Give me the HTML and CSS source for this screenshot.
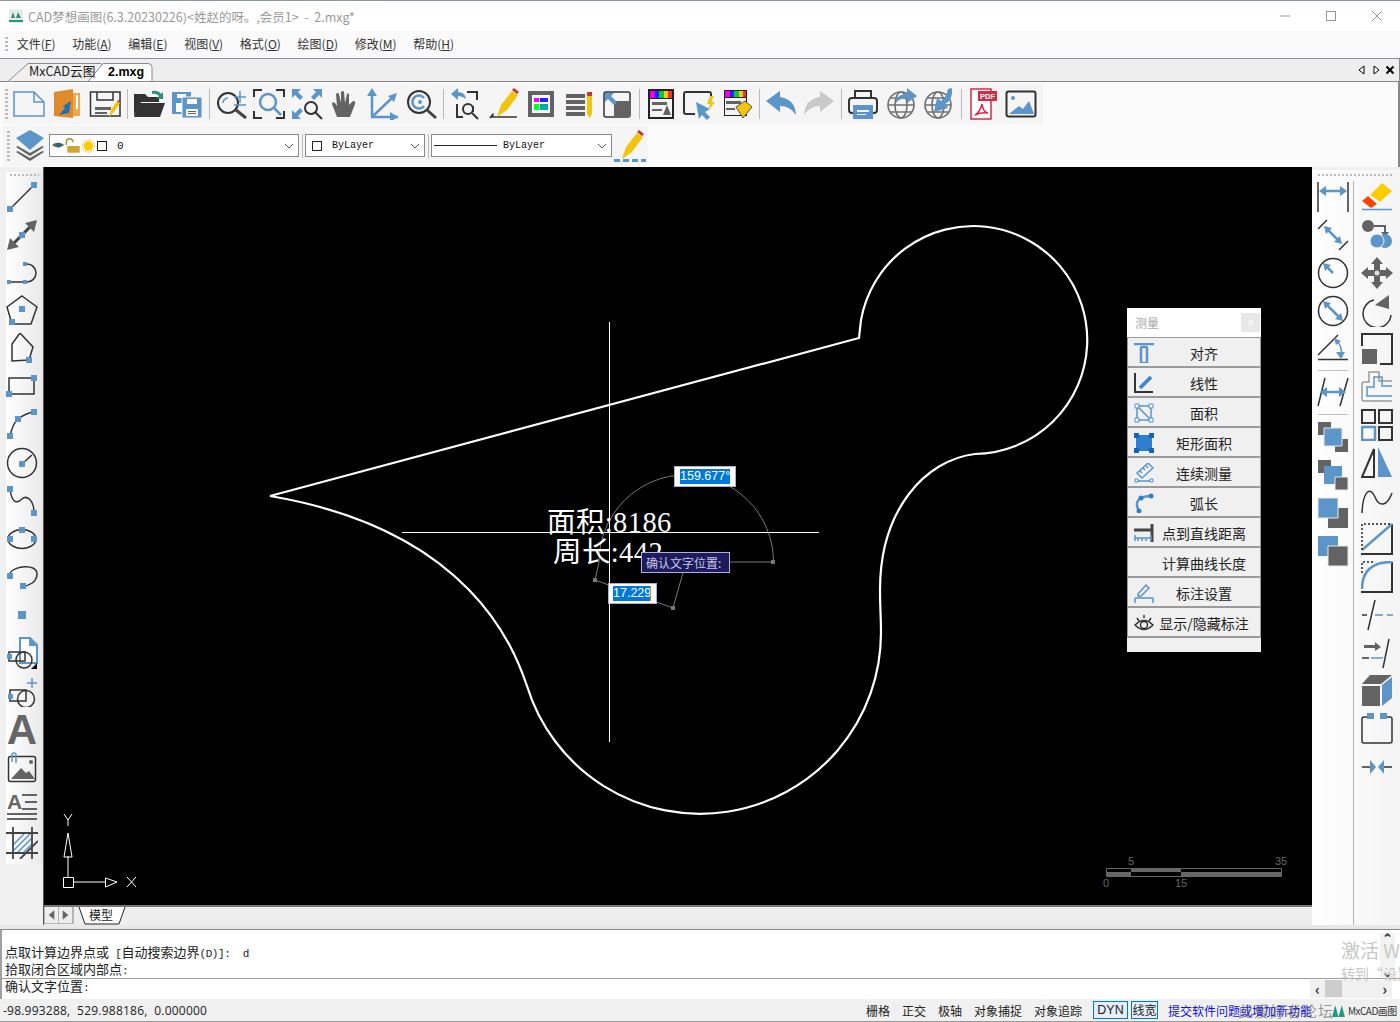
FILE: index.html
```html
<!DOCTYPE html>
<html lang="zh">
<head>
<meta charset="utf-8">
<title>CAD梦想画图</title>
<link rel="stylesheet" href="styles.css">
</head>
<body>
<header class="title">
  <svg class="logo" viewBox="0 0 16 16"><rect x="1" y="1" width="14" height="14" rx="2" fill="#e4ece8"/><path d="M3 10 5 4l2 6zM8 10l2-6 3 6z" fill="#2e8f7a"/><path d="M1 12h14v2H1z" fill="#1f9a82"/></svg>
  <span class="title-text">CAD梦想画图(6.3.20230226)&lt;姓赵的呀。,会员1&gt;  -  2.mxg*</span>
  <div class="winbtns">
    <svg class="wb" viewBox="0 0 12 12"><path d="M1 6h10" stroke="#999" fill="none"/></svg>
    <svg class="wb" viewBox="0 0 12 12"><rect x="1.5" y="1.5" width="9" height="9" stroke="#999" fill="none"/></svg>
    <svg class="wb" viewBox="0 0 12 12"><path d="M1 1l10 10M11 1 1 11" stroke="#999" fill="none"/></svg>
  </div>
</header>

<nav class="menu">
  <span class="grip"></span>
  <span class="mi">文件(<u>F</u>)</span><span class="mi">功能(<u>A</u>)</span><span class="mi">编辑(<u>E</u>)</span><span class="mi">视图(<u>V</u>)</span><span class="mi">格式(<u>O</u>)</span><span class="mi">绘图(<u>D</u>)</span><span class="mi">修改(<u>M</u>)</span><span class="mi">帮助(<u>H</u>)</span>
</nav>

<div class="tabs">
  <svg class="tabshape" width="156" height="23" viewBox="0 0 156 23">
    <path d="M8 22.5 28 4.5H101L106 10" fill="#f0f0f0" stroke="#888"/>
    <path d="M88 22.5 103 4.5H148Q152 4.5 152 8.5V22.5Z" fill="#fff" stroke="#888"/>
    <text x="29" y="17" class="tab-t">MxCAD云图</text>
    <text x="108" y="17" class="tab-a">2.mxg</text>
  </svg>
  <div class="tabnav">
    <svg class="tn" viewBox="0 0 10 10"><path d="M7 1v8L2 5z" fill="#fff" stroke="#000"/></svg>
    <svg class="tn" viewBox="0 0 10 10"><path d="M3 1v8l5-4z" fill="#fff" stroke="#000"/></svg>
    <svg class="tn" viewBox="0 0 10 10"><path d="M1.5 1.5l7 7M8.5 1.5l-7 7" stroke="#000" stroke-width="2" fill="none"/></svg>
  </div>
</div>

<div class="bars">
  <div class="tb tb1">
    <span class="grip tall"></span>
    <svg class="i" viewBox="0 0 32 32"><path class="sb" d="M1 4H21L31 14V28H1ZM21 4V14H31"/></svg>
    <svg class="i" viewBox="0 0 32 32"><path fill="#e08a2e" d="M3 4 22 1V30L3 28Z"/><path fill="#f0a848" d="M22 5h7v23h-7z"/><path fill="#fff" d="M25 7h2v14h-2z"/><path fill="#2a6cb0" d="M20 13 18 25 8 27 14 20 12 18Z"/></svg>
    <svg class="i" viewBox="0 0 32 32"><path class="s" d="M1.500 4H31V28H1.500ZM8 4V12H24V4"/><path class="g" d="M6 19H22V22H6zM6 24H18V26H6z"/><path fill="#f2c40c" d="M20 29 22 22 28 13 31 15 25 24Z"/><path fill="#c33" d="M28 13l1-1 3 2-1 1z"/></svg>
    <span class="sep"></span>
    <svg class="i" viewBox="0 0 32 32"><path fill="#333" d="M1 6H12L15 9H26V14H8L1 28Z"/><path fill="#333" d="M6 15H32L27 29H1Z"/><path fill="#2e8f7a" d="M19 3 Q25 2 28 6L30 4V11H24L26 8Q23 5 19 6Z"/></svg>
    <svg class="i" viewBox="0 0 32 32"><path class="b" d="M1 4H20V26H1z"/><path fill="#fff" d="M6 6H15V10H6zM5 15H11V24H5z"/><path class="b" stroke="#f5f5f5" d="M11 9H31V30H11z"/><path fill="#fff" d="M16 11H26V16H16zM15 21H27V28H15z"/><path class="g" d="M17 23H25V24H17zM17 25H25V26H17z"/></svg>
    <span class="sep"></span>
    <svg class="i" viewBox="0 0 32 32"><circle class="s2" cx="13" cy="15" r="10"/><path class="s3" d="M21 22 31 30"/><path class="sb" d="M19 9H31M25 3V15M19 17H31"/><path class="sb" d="M8 15a5 5 0 0 1 5-5"/></svg>
    <svg class="i" viewBox="0 0 32 32"><path class="s2" d="M1 9V2H9M23 2H31V9M1 23V30H9M23 30H31V23"/><circle class="sb2" cx="15" cy="14" r="8"/><path class="sb2" d="M21 20 28 27"/></svg>
    <svg class="i" viewBox="0 0 32 32"><path class="b" d="M1 1H10L7 4 12 9 9 12 4 7 1 10ZM31 1V10L28 7 23 12 20 9 25 4 22 1ZM1 31V22L4 25 9 20 12 23 7 28 10 31Z"/><circle class="s2" cx="20" cy="20" r="6"/><path class="s2" d="M24 24 31 31"/></svg>
    <svg class="i" viewBox="0 0 32 32"><path class="g" d="M8 29 3 16Q3 13 6 15L8 18 7 6Q9 4 10 6L12 15 12 4Q14 2 15 4L16 15 18 6Q20 4 20 7L20 17 24 13Q27 13 26 16L21 29Z"/></svg>
    <svg class="i" viewBox="0 0 32 32"><path class="sb2" d="M5 4V29H31"/><path class="b" d="M5 0 0 8H10ZM31 29 23 24V34ZM30 5 21 8 27 14Z"/><path class="sb2" d="M5 29 25 10"/></svg>
    <svg class="i" viewBox="0 0 32 32"><circle class="s2" cx="14" cy="14" r="11"/><path class="s3" d="M22 22 31 30"/><path class="sb2" d="M19 10A6.500 6.500 0 1 0 19 18"/><circle class="b" cx="15" cy="14" r="2"/></svg>
    <span class="sep"></span>
    <svg class="i" viewBox="0 0 32 32"><path class="s2" d="M18 4H28V12M8 16V29H14M24 24V18"/><path class="b" d="M2 6 9 0V4Q16 4 17 11Q13 8 9 8V12Z"/><circle class="s2" cx="19" cy="21" r="5"/><path class="s2" d="M23 25 29 31"/></svg>
    <svg class="i" viewBox="0 0 32 32"><path class="s" d="M3 30Q8 23 5 29H30"/><path fill="#f2c40c" d="M10 29 14 17 25 3 31 7 20 22Z"/><path fill="#c33" d="M25 2l2-2 5 4-2 2z"/></svg>
    <svg class="i" viewBox="0 0 32 32"><path class="g" d="M3 3H29V29H3z"/><path fill="#f8f8f8" d="M7 7H25V25H7z"/><path fill="#f0f" d="M9 10H14V14H9z"/><path fill="#22f" d="M15 10H23V14H15z"/><path fill="#0f2" d="M9 16H14V22H9z"/><path fill="#0aa" d="M15 16H23V22H15z"/></svg>
    <svg class="i" viewBox="0 0 32 32"><path class="g" d="M3 6H22V10H3zM3 12H22V16H3zM3 18H22V22H3zM3 24H22V28H3z"/><path fill="#f2c40c" d="M24 8H29V26L26.500 30 24 26Z"/><path fill="#c33" d="M24 4H29V8H24z"/></svg>
    <svg class="i" viewBox="0 0 32 32"><rect class="s" x="3" y="4" width="26" height="25" rx="2"/><path class="g" d="M13 13H29V29H13zM13 13"/><path class="b" d="M4 5H13L10 8 16 14 13 17 7 11 4 14Z"/></svg>
    <span class="sep"></span>
    <svg class="i" viewBox="0 0 32 32"><path fill="#222" d="M3 1H29V31H3z"/><path fill="#f4f4f4" d="M5 11H27V29H5z"/><path fill="#e0e" d="M5 3H10V10H5z"/><path fill="#22f" d="M10 3H14V10H10z"/><path fill="#0c4" d="M14 3H19V10H14z"/><path fill="#fc0" d="M19 3H23V10H19z"/><path fill="#e33" d="M23 3H27V10H23z"/><path class="g" d="M7 14H22V17H7zM7 21H17V23H7zM18 27 22 17 26 27Z"/></svg>
    <svg class="i" viewBox="0 0 32 32"><path class="s2" d="M12 26H3Q1 26 1 24V6Q1 4 3 4H26Q28 4 28 6V13"/><path class="b" d="M13 14 27 21 22 24 27 29 24 32 19 27 16 31Z"/><path fill="#f2c40c" d="M27 8 31 8 28 14H32L25 23 27 16H24Z"/></svg>
    <svg class="i" viewBox="0 0 32 32"><path fill="#222" d="M3 2H26V28H3z"/><path fill="#f4f4f4" d="M4 10H25V27H4z"/><path fill="#e0e" d="M4 3H9V9H4z"/><path fill="#22f" d="M9 3H13V9H9z"/><path fill="#0c4" d="M13 3H18V9H13z"/><path fill="#fc0" d="M18 3H22V9H18z"/><path fill="#e33" d="M22 3H25V9H22z"/><path class="g" d="M5 13H20V16H5zM5 20H14V22H5z"/><path fill="#f2c40c" stroke="#555" d="M15 19 24 13 31 19 22 30Z"/></svg>
    <span class="sep"></span>
    <svg class="i" viewBox="0 0 32 32"><path class="b" d="M1 13 15 3V9Q30 11 31 27 25 18 15 18V24Z"/></svg>
    <svg class="i" viewBox="0 0 32 32"><path fill="#c9c9c9" d="M31 13 17 3V9Q2 11 1 27 7 18 17 18V24Z"/></svg>
    <span class="sep"></span>
    <svg class="i" viewBox="0 0 32 32"><path class="s2" d="M8 10V3H24V10"/><rect class="s2" x="2" y="10" width="28" height="15" rx="3"/><path class="b" d="M6 17H26V31H6z"/><path fill="#fff" d="M10 22H22V24H10zM10 26H19V27H10z"/></svg>
    <svg class="i" viewBox="0 0 32 32"><circle class="sg" cx="16" cy="17" r="13"/><ellipse class="sg" cx="16" cy="17" rx="6" ry="13"/><path class="sg" d="M3 17H29M5 10H27M5 24H27"/><path class="b" d="M10 16Q12 5 22 6V0L32 8 22 15V10Q14 10 10 16Z"/></svg>
    <svg class="i" viewBox="0 0 32 32"><circle class="sg" cx="15" cy="17" r="13"/><ellipse class="sg" cx="15" cy="17" rx="6" ry="13"/><path class="sg" d="M2 17H28M4 10H26M4 24H26"/><path class="b" d="M29 0Q30 12 22 16L25 20 11 24 14 10 18 13Q23 10 25 1Z"/></svg>
    <span class="sep"></span>
    <svg class="i" viewBox="0 0 32 32"><path fill="#fff" stroke="#d8294a" stroke-width="1.500" d="M4 1H24V31H4Z"/><path fill="#d8294a" d="M11 3H30V13H11z"/><text x="20.500" y="11" class="pdf">PDF</text><path fill="none" stroke="#d8294a" stroke-width="1.500" d="M8 27Q13 24 15 16Q16 24 21 25Q14 24 8 27Z"/></svg>
    <svg class="i" viewBox="0 0 32 32"><rect class="s2" x="1.500" y="3.500" width="29" height="25" rx="2"/><circle class="b" cx="8" cy="10" r="2"/><path class="b" d="M4 26 14 18 18 21 24 13 29 26Z"/></svg>
  </div>
  <div class="tb tb2">
    <span class="grip tall"></span>
    <svg class="layers" viewBox="0 0 30 32"><path class="g" d="M15 14 29 22 15 31 1 22Z"/><path fill="#f4f4f4" d="M15 12 29 20 15 28 1 20Z"/><path class="g" d="M15 9 29 17 15 26 1 17Z"/><path fill="#f4f4f4" d="M15 7 29 15 15 23 1 15Z"/><path class="b" d="M15 0 29 8 15 20 1 8Z"/></svg>
    <div class="combo layer">
      <svg class="ls" viewBox="0 -1 46 16"><path class="g" d="M0 6Q6 1 13 6Q6 11 0 6Z"/><circle cx="7" cy="6" r="2.500" fill="#268"/><path d="M15 6V3a3 3 0 0 1 7 0" fill="none" stroke="#b08a20" stroke-width="1.500"/><path fill="#d0a430" d="M16 7H29V14H16z"/><circle cx="38" cy="7" r="5" fill="#fc0"/><circle cx="38" cy="7" r="6.500" fill="none" stroke="#f90" stroke-dasharray="1.500 1.500"/></svg>
      <span class="sw"></span><span class="ct zero">0</span><svg class="chev" viewBox="0 0 10 6"><path d="M1 1 5 5 9 1" fill="none" stroke="#555"/></svg>
    </div>
    <span class="sep s2x"></span>
    <div class="combo color">
      <span class="sw"></span><span class="ct">ByLayer</span><svg class="chev" viewBox="0 0 10 6"><path d="M1 1 5 5 9 1" fill="none" stroke="#555"/></svg>
    </div>
    <span class="sep s2x"></span>
    <div class="combo ltype">
      <span class="lt"></span><span class="ct">ByLayer</span><svg class="chev" viewBox="0 0 10 6"><path d="M1 1 5 5 9 1" fill="none" stroke="#555"/></svg>
    </div>
    <svg class="i pen" viewBox="0 0 32 32"><path class="b" d="M0 29H6V32H0zM9 29H15V32H9zM18 29H24V32H18zM27 29H32V32H27z"/><path fill="#f2c40c" d="M8 29 12 17 23 3 29 7 18 22Z"/><path fill="#c33" d="M23 2l2-2 5 4-2 2z"/></svg>
  </div>
</div>

<main class="main">
  <aside class="leftcol">
    <div class="lefttb">
      <span class="hgrip"></span>
      <svg class="i" viewBox="0 0 32 32"><path class="s" d="M4 28 28 4"/><path class="b" d="M1 25H7V31H1zM25 1H31V7H25z"/></svg>
      <svg class="i" viewBox="0 0 32 32"><path class="s3" d="M4 28 28 4"/><path class="g" d="M1 31 4 19 13 28ZM31 1 28 13 19 4Z"/><path class="b" d="M13 13H19V19H13z"/></svg>
      <svg class="i" viewBox="0 0 32 32"><path class="s" d="M3 25H19M19 7h2a9 9 0 0 1 0 18h-2"/><path class="b" d="M1 23H5V27H1zM17 23H21V27H17zM17 5H21V9H17z"/></svg>
      <svg class="i" viewBox="0 0 32 32"><path class="s" d="M16 1 31 12 25 29H6L1 12Z"/><path class="b" d="M13 11H19V17H13zM3 24H9V30H3z"/></svg>
      <svg class="i" viewBox="0 0 32 32"><path class="s" d="M14 0 27 14 23 27 6 28V11Z"/><path class="b" d="M20 24H26V30H20z"/></svg>
      <svg class="i" viewBox="0 0 32 32"><path class="s" d="M3 7H28V23H3Z"/><path class="b" d="M0 20H6V26H0zM25 4H31V10H25z"/></svg>
      <svg class="i" viewBox="0 0 32 32"><path class="s" d="M4 27Q7 14 12 10Q20 4 28 3"/><path class="b" d="M1 24H7V30H1zM9 7H15V13H9zM25 0H31V6H25z"/></svg>
      <svg class="i" viewBox="0 0 32 32"><circle class="s" cx="16" cy="16" r="14.500"/><path class="s" d="M16 17 26 8"/><path class="b" d="M13 14H19V20H13z"/></svg>
      <svg class="i" viewBox="0 0 32 32"><path class="s" d="M4 4C6 20 12 18 16 14C20 10 28 14 28 28"/><path class="b" d="M1 1H7V7H1zM25 25H31V31H25z"/></svg>
      <svg class="i" viewBox="0 0 32 32"><ellipse class="s" cx="16" cy="16" rx="14" ry="9.500"/><path class="b" d="M1 13H7V19H1zM25 13H31V19H25zM13 4H19V10H13z"/></svg>
      <svg class="i" viewBox="0 0 32 32"><path class="s" d="M4 12C8 5 31 2 31 13C31 21 23 25 17 25"/><path class="b" d="M1 12H7V18H1zM14 22H20V28H14z"/></svg>
      <svg class="i" viewBox="0 0 32 32"><path class="b" d="M12 12H20V20H12z"/></svg>
      <svg class="i" viewBox="0 0 32 32"><path fill="#fff" stroke="#5b95c9" stroke-width="2" d="M14 1H24L31 8V26H14Z"/><path class="b" d="M23 1 31 9H23Z"/><path class="s" d="M3 15H19V24H3z"/><circle class="s" cx="18" cy="23" r="8"/><path class="b" d="M1 17H6V22H1z"/><path fill="#000" d="M31 26V32H25Z"/></svg>
      <svg class="i" viewBox="0 0 32 32"><path class="s" d="M4 15H20V26H4z"/><circle class="s" cx="20" cy="24" r="8.500"/><path class="b" d="M2 19H7V24H2z"/><path class="sb" d="M26 3V13M21 8H31"/></svg>
      <svg class="i" viewBox="0 0 32 32"><text x="16" y="31" class="bigA">A</text></svg>
      <svg class="i" viewBox="0 0 32 32"><rect class="s" x="2.500" y="5.500" width="27" height="25" rx="2"/><circle class="g" cx="25" cy="11" r="2"/><path class="g" d="M5 28 15 17 20 22 23 20 29 28Z"/><path class="sb" d="M10 12V4Q10 2 8 2 6 2 6 4V11"/></svg>
      <svg class="i" viewBox="0 0 32 32"><text x="1" y="20" class="midA">A</text><path class="s" d="M16 6H31M19 13H31M16 20H31M1 25H31M1 30H31"/></svg>
      <svg class="i" viewBox="0 0 32 32"><path class="sb" d="M7 18 18 7M7 24 24 7M11 26 26 11M17 26 26 17"/><path class="hat" d="M7 0V32M26 0V32M0 6H32M0 26H32M14 32 32 14"/></svg>
    </div>
  </aside>

  <div class="center">
    <div class="canvas">
      <svg class="draw" viewBox="44 167 1267 738">
        <path class="cad" d="M270 496 859 338 861 320A114 114 0 1 1 975 454C925 460 880 510 880 590C880 610 881 615 881 632A181 181 0 0 1 527 686C514 648 470 530 270 496Z"/>
        <path class="hair" d="M609.500 322V742M402 532.500H819"/>
        <path class="rub" d="M686 562 773.500 562A87 87 0 0 0 599 562L595 580 673 608 686 562"/>
        <path class="hand" d="M593 578h4v4h-4zM671 606h4v4h-4zM771 560h4v4h-4z"/>
        <text x="547" y="532" class="cadt">面积:8186</text>
        <text x="553" y="562" class="cadt">周长:442</text>
        <path class="ucs" d="M68 877V856M73.500 882H106"/>
        <path class="ucs" d="M63.500 877.500H73.500V887.500H63.500ZM68 833 64 857H72ZM105.500 878 117 882 105.500 887ZM64 814 68 820 72 814M68 820V826M127 877 136 887M136 877 127 887"/>
        <path class="sc0" d="M1106.500 868.500H1281.500V876.500H1106.500Z"/>
        <path class="sc1" d="M1107 872H1131V876H1107ZM1131 869H1181V872H1131ZM1181 872H1281V876H1181Z"/>
        <text x="1106" y="887" class="sct">0</text><text x="1131" y="865" class="sct">5</text><text x="1181" y="887" class="sct">15</text><text x="1281" y="865" class="sct">35</text>
      </svg>
      <div class="dyn d1"><span class="dv">159.677°</span></div>
      <div class="dyn d2"><span class="dv">17.229</span></div>
      <div class="tip">确认文字位置:</div>
      <section class="panel">
        <div class="phead"><span class="ptitle">测量</span><span class="pclose">x</span></div>
        <div class="pbtn"><svg class="pi" viewBox="0 0 20 20"><path class="sb2" d="M0 1H20"/><rect class="sb2" x="7" y="4" width="6" height="16" rx="1"/></svg><span>对齐</span></div>
        <div class="pbtn"><svg class="pi" viewBox="0 0 20 20"><path class="s2" d="M1 0V19H19"/><path class="sb3" d="M6 15 17 4"/></svg><span>线性</span></div>
        <div class="pbtn"><svg class="pi" viewBox="0 0 20 20"><path class="sb" d="M3 3H17V17H3ZM3 3 17 17"/><path class="bw" d="M1 1H5V5H1zM15 1H19V5H15zM1 15H5V19H1zM15 15H19V19H15z"/></svg><span>面积</span></div>
        <div class="pbtn"><svg class="pi" viewBox="0 0 20 20"><path fill="#2f7fd0" d="M2 2H18V18H2Z"/><path fill="#1a62b8" d="M0 0H5V5H0zM15 0H20V5H15zM0 15H5V20H0zM15 15H20V20H15z"/></svg><span>矩形面积</span></div>
        <div class="pbtn"><svg class="pi" viewBox="0 0 20 20"><path class="sb" d="M3 10 14 0 19 5 8 15ZM6 8l2 2M9 5l2 2M12 3l2 2M1 18H19"/><path class="bw" d="M1 16H4V19H1zM16 16H19V19H16z"/></svg><span>连续测量</span></div>
        <div class="pbtn"><svg class="pi" viewBox="0 0 20 20"><path class="sb2" d="M5 18Q0 9 7 5Q11 3 17 3"/><circle fill="#2f7fd0" cx="5" cy="18" r="2.500"/><circle fill="#2f7fd0" cx="7" cy="5" r="2.500"/><circle fill="#2f7fd0" cx="17" cy="3" r="2.500"/></svg><span>弧长</span></div>
        <div class="pbtn"><svg class="pi" viewBox="0 0 20 20"><path class="s3" d="M0 7H18M18 1V19"/><path class="sb" d="M1 12V18M17 12V18M1 15H17M4 15v3M8 15v3M12 15v3"/></svg><span>点到直线距离</span></div>
        <div class="pbtn"><span class="pi"></span><span>计算曲线长度</span></div>
        <div class="pbtn"><svg class="pi" viewBox="0 0 20 20"><path class="sb" d="M4 11 12 2 15 5 7 13H4ZM1 15H19M1 20V15M19 20V15"/></svg><span>标注设置</span></div>
        <div class="pbtn"><svg class="pi" viewBox="0 0 20 20"><path class="s" d="M1 12Q10 3 19 12 10 21 1 12ZM3 5 5 8M10 2V5M17 5 15 8"/><circle class="s" cx="10" cy="12" r="3.500"/></svg><span>显示/隐藏标注</span></div>
        <div class="pfoot"></div>
      </section>
    </div>
    <div class="sheet">
      <div class="snav">
        <svg class="sa" viewBox="0 0 14 14"><path d="M10 2V12L4 7Z" fill="#666"/></svg>
        <svg class="sa" viewBox="0 0 14 14"><path d="M4 2V12L10 7Z" fill="#666"/></svg>
      </div>
      <svg class="stab" width="50" height="18" viewBox="0 0 50 18"><path d="M2 0 8 17H42L48 0" fill="#fff" stroke="#222"/><text x="12" y="13" class="sheet-t">模型</text></svg>
    </div>
  </div>

  <aside class="righttb">
    <span class="hgrip wide"></span>
    <div class="rcols">
      <div class="rcol c1">
        <svg class="i" viewBox="0 0 32 32"><path class="s" d="M1 1V31M31 1V31"/><path class="sb2" d="M6 10H26"/><path class="b" d="M2 10 9 5V15ZM30 10 23 5V15Z"/></svg>
        <svg class="i" viewBox="0 0 32 32"><path class="s" d="M1 10 10 1M22 31 31 22"/><path class="sb2" d="M9 9 23 23"/><path class="b" d="M7 7 15 9 9 15ZM25 25 17 23 23 17Z"/></svg>
        <svg class="i" viewBox="0 0 32 32"><circle class="s" cx="16" cy="16" r="14.500"/><path class="sb2" d="M8 8 16 16"/><path class="b" d="M6 6 14 8 8 14Z"/></svg>
        <svg class="i" viewBox="0 0 32 32"><circle class="s" cx="16" cy="16" r="14.500"/><path class="sb2" d="M8 8 24 24"/><path class="b" d="M6 6 14 8 8 14ZM26 26 18 24 24 18Z"/></svg>
        <svg class="i" viewBox="0 0 32 32"><path class="s" d="M1 22 21 2M1 26.500H31"/><path class="sb" d="M19 7Q26 14 24 22"/><path class="b" d="M17 5 24 8 19 12ZM24 26 19 19H28Z"/></svg>
        <span class="vsep"></span>
        <svg class="i" viewBox="0 0 32 32"><path class="s" d="M1 30 8 2M23 30 31 2"/><path class="sb2" d="M6 16H26"/><path class="b" d="M3 16 10 11V21ZM29 16 22 11V21Z"/></svg>
        <span class="vsep v2"></span>
        <svg class="i" viewBox="0 0 32 32"><path class="g" d="M1 1H14V14H1zM18 18H31V31H18z"/><path class="b" stroke="#e8e8e8" d="M7 7H25V25H7z"/></svg>
        <svg class="i" viewBox="0 0 32 32"><path class="g" d="M1 1H14V14H1z"/><path class="b" d="M7 7H25V25H7z"/><path class="g" stroke="#e8e8e8" d="M18 18H31V31H18z"/></svg>
        <svg class="i" viewBox="0 0 32 32"><path class="g" d="M11 11H31V31H11z"/><path class="b" stroke="#e8e8e8" d="M1 1H21V21H1z"/></svg>
        <svg class="i" viewBox="0 0 32 32"><path class="b" d="M1 1H21V21H1z"/><path class="g" stroke="#e8e8e8" d="M11 11H31V31H11z"/></svg>
      </div>
      <div class="rcol c2">
        <svg class="i" viewBox="0 0 32 32"><path class="sb" d="M1 28.500H31"/><path fill="#fc0" d="M9 14 21 2 31 10 19 21Z"/><path fill="#fff" d="M7 16 9 14 19 21 17 23Z"/><path fill="#f40" d="M1 20 7 15 16 23 10 27Z"/></svg>
        <svg class="i" viewBox="0 0 32 32"><circle class="g" cx="7" cy="7" r="6"/><path class="s" d="M13 7H24V14"/><path class="g" d="M20 13H28L24 18Z"/><circle class="b" cx="24" cy="22" r="7"/><circle class="b" stroke="#f4f4f4" cx="16" cy="22" r="7"/></svg>
        <svg class="i" viewBox="0 0 32 32"><path class="g" d="M16 0 22 7H19V13H25V10L32 16 25 22V19H19V25H22L16 32 10 25H13V19H7V22L0 16 7 10V13H13V7H10Z"/><circle fill="#ddd" cx="16" cy="16" r="2.500"/></svg>
        <svg class="i" viewBox="0 0 32 32"><path class="s" d="M13 5A14 14 0 1 0 30 20"/><path class="g" d="M14 10 28 0V14Z"/></svg>
        <svg class="i" viewBox="0 0 32 32"><path class="s2" d="M1 13V1H31V31H19"/><path class="g" d="M1 16H16V31H1z"/></svg>
        <svg class="i" viewBox="0 0 32 32"><path fill="none" stroke="#999" stroke-width="1.500" d="M31 10H18V1H8V11H3Q1 11 1 13V28Q1 30 3 30H31"/><path class="sb" d="M31 15H21V6H13V16H6V25H31"/></svg>
        <svg class="i" viewBox="0 0 32 32"><path class="s2" d="M1 1H14V14H1zM18 1H31V14H18zM18 18H31V31H18z"/><path class="sb2" d="M1 18H14V31H1z"/></svg>
        <svg class="i" viewBox="0 0 32 32"><path class="s2" d="M13 2V30H1Z"/><path class="b" d="M17 0V30H31Z"/></svg>
        <svg class="i" viewBox="0 0 32 32"><path class="s" d="M1 28C2 4 10 2 14 12S26 22 31 8"/></svg>
        <svg class="i" viewBox="0 0 32 32"><path class="s2" d="M1 30V31H31V1"/><path class="sb2" d="M1 27 31 1"/><path fill="none" stroke="#222" stroke-width="1.500" stroke-dasharray="2 2" d="M1 27V1H31"/></svg>
        <svg class="i" viewBox="0 0 32 32"><path class="s2" d="M1 30V31H31V1"/><path class="sb2" d="M1 28Q1 1 31 1"/><path fill="none" stroke="#222" stroke-width="1.500" stroke-dasharray="2 2" d="M1 12V1H14"/></svg>
        <svg class="i" viewBox="0 0 32 32"><path class="s" d="M14 1 7 31M1 16H6"/><path class="sb" d="M14 16H22M26 16H32"/></svg>
        <svg class="i" viewBox="0 0 32 32"><path class="s" d="M1 21H8M28 2 22 31"/><path class="sb" d="M10 21H22"/><path class="g" d="M3 8H14V5L20 10 14 14V11H3z"/></svg>
        <svg class="i" viewBox="0 0 32 32"><path class="g" d="M9 0H31L20 9H1ZM1 11H19V31H1z"/><path class="b" d="M21 10 31 2V23L21 31Z"/></svg>
        <svg class="i" viewBox="0 0 32 32"><path class="s" d="M8 4H3Q1 4 1 6V28Q1 30 3 30H29Q31 30 31 28V6Q31 4 29 4H24"/><path class="b" d="M6 0H13V6H6zM19 0H26V6H19z"/></svg>
        <svg class="i" viewBox="0 0 32 32"><path class="s" d="M1 16H12M20 16H31"/><path class="b" d="M9 9 15 16 9 23ZM23 9 17 16 23 23Z"/></svg>
      </div>
    </div>
  </aside>
</main>

<div class="splitter"></div>

<section class="cmd">
  <div class="output">
    <div class="lines">
      <div class="cl">点取计算边界点或<span class="lat"> [</span>自动搜索边界<span class="lat">(D)]:  d</span></div>
      <div class="cl">拾取闭合区域内部点<span class="lat">:</span></div>
    </div>
    <div class="vbar"><span>⌃</span><span>⌄</span></div>
  </div>
  <div class="input">
    <div class="cl">确认文字位置<span class="lat">:</span></div>
    <div class="hbar"><span class="har">‹</span><span class="thumb"></span><span class="har">›</span></div>
  </div>
</section>

<footer class="status">
  <span class="coords">-98.993288,  529.988186,  0.000000</span>
  <div class="stats">
    <span class="st">栅格</span><span class="st">正交</span><span class="st">极轴</span><span class="st">对象捕捉</span><span class="st last">对象追踪</span>
    <span class="st on dyn-b">DYN</span><span class="st on lw-b">线宽</span><span class="link">提交软件问题或增加新功能</span>
  </div>
</footer>

<div class="wm w1">激活 W</div>
<div class="wm w2">转到“设置”</div>
<div class="wm3">此爱好者论坛</div>
<div class="brand"><svg class="blogo" viewBox="0 0 14 14"><path d="M1 13 4 2l3 11zM7 13l3-11 3 11z" fill="#1f9a82"/></svg><span>MxCAD画图</span></div>
</body>
</html>
```

FILE: styles.css
```css
* { box-sizing: border-box; }
html, body { margin: 0; padding: 0; }
body {
  width: 1400px; height: 1022px; overflow: hidden; position: relative;
  display: flex; flex-direction: column;
  background: #f0f0f0; color: #222;
  font: 12px "Noto Sans CJK SC", "Noto Sans", sans-serif;
}
.b { fill: #5b95c9; }
.g { fill: #636363; }
.bw { fill: #fff; stroke: #4a8ed0; stroke-width: 1; }
.s { fill: none; stroke: #333; stroke-width: 1.5; }
.s2 { fill: none; stroke: #333; stroke-width: 2; }
.s3 { fill: none; stroke: #444; stroke-width: 3; }
.sb { fill: none; stroke: #5b95c9; stroke-width: 1.5; }
.sb2 { fill: none; stroke: #5b95c9; stroke-width: 2.5; }
.sb3 { fill: none; stroke: #3a86d4; stroke-width: 3.5; }
.sg { fill: none; stroke: #707070; stroke-width: 1.6; }
.hat { fill: none; stroke: #444; stroke-width: 1.8; }
.pdf { font: bold 7.500px "Liberation Sans", sans-serif; fill: #fff; text-anchor: middle; }
.bigA { font: bold 42px "Liberation Sans", sans-serif; fill: #666; text-anchor: middle; }
.midA { font: bold 21px "Liberation Sans", sans-serif; fill: #666; }

/* title */
.title { height: 31px; flex: none; display: flex; align-items: center; background: #fff; border-top: 1px solid #8a9a9c; padding-left: 8px; }
.logo { width: 16px; height: 16px; margin-right: 4px; }
.title-text { color: #9a9a9a; font-size: 12.500px; white-space: pre; }
.winbtns { margin-left: auto; display: flex; gap: 34px; padding-right: 17px; }
.wb { width: 12px; height: 12px; }

/* menu */
.menu { height: 28px; flex: none; display: flex; align-items: center; gap: 16.700px; background: #fafafa; border-bottom: 1px solid #8c8c9c; padding-left: 5px; padding-bottom: 2px; }
.grip { width: 3px; height: 14px; flex: none; background: repeating-linear-gradient(#bbb 0 2px, transparent 2px 4px); margin-right: -8px; }
.mi { color: #333; line-height: 16px; }

/* tabs */
.tabs { height: 23px; flex: none; position: relative; display: flex; background: #eee; border-bottom: 1px solid #888; border-right: 1px solid #888; }
.tabshape { flex: none; overflow: visible; }
.tab-t { font: 12.700px "Noto Sans CJK SC", "Noto Sans", sans-serif; fill: #222; }
.sheet-t { font: 12px "Noto Sans CJK SC", "Noto Sans", sans-serif; fill: #222; }
.tab-a { font: bold 12.500px "Liberation Sans", "Noto Sans", sans-serif; fill: #000; }
.tabnav { margin-left: auto; display: flex; gap: 4px; align-items: center; padding-right: 4px; }
.tn { width: 10px; height: 10px; }

/* toolbars */
.bars { height: 85px; flex: none; background: #fbfbfb; border-right: 2px solid #888; display: flex; flex-direction: column; }
.tb { display: flex; align-items: center; background: #f5f5f5; }
.tb1 { height: 40px; width: 1040px; margin: 2px 0 0 3px; }
.tb1 .i { margin: 0 3px; }
.tb1 .grip { height: 30px; margin-right: 2px; margin-left: 2px; }
.tb2 { height: 41px; width: 645px; margin: 1px 0 0 3px; padding-left: 1px; }
.tb2 .grip { height: 30px; margin-left: 3px; margin-right: 5px; }
.i { width: 32px; height: 32px; flex: none; display: block; }
.sep { width: 1px; height: 30px; background: #bbb; margin: 0 2.500px; flex: none; }
.s2x { height: 24px; }
.layers { width: 30px; height: 32px; flex: none; margin-right: 4px; }
.combo { height: 23px; background: #fff; border: 1px solid #8a8a8a; display: flex; align-items: center; flex: none; padding-left: 2px; position: relative; }
.layer { width: 250px; }
.color { width: 120px; padding-left: 4px; }
.ltype { width: 181px; }
.ls { width: 44px; height: 16px; flex: none; }
.sw { width: 10px; height: 10px; border: 1px solid #222; flex: none; margin-left: 2px; }
.layer .sw { margin-left: 1px; }
.ct { font: 10px "Liberation Mono", monospace; color: #111; margin-left: 10px; }
.zero { margin-left: 10px; font-size: 11px; }
.chev { width: 10px; height: 6px; position: absolute; right: 4px; top: 8px; }
.lt { width: 63px; height: 1px; background: #222; flex: none; margin-right: -4px; }
.pen { margin-left: 2px; }

/* main */
.main { height: 758px; flex: none; display: flex; }
.leftcol { width: 44px; flex: none; padding: 5px 0 0 6px; border-right: 1px solid #555; }
.lefttb { width: 37px; height: 692px; background: linear-gradient(90deg, #fff, #e9e9e9); }
.lefttb .i { margin: 0 0 6px 0; }
.lefttb .hgrip { margin-bottom: 3px; }
.hgrip { display: block; height: 6px; margin: 0 4px; background: repeating-linear-gradient(90deg, #bbb 0 2px, transparent 2px 4px) center / 100% 2px no-repeat; }
.center { width: 1268px; flex: none; display: flex; flex-direction: column; }
.canvas { height: 740px; flex: none; position: relative; background: #000; border-bottom: 2px solid #777; }
.draw { width: 1267px; height: 738px; display: block; }
.cad { fill: none; stroke: #fff; stroke-width: 2.200; }
.hair { fill: none; stroke: #fff; stroke-width: 1; }
.rub { fill: none; stroke: #777; stroke-width: 1; }
.hand { fill: #777; }
.cadt { font: 28.500px "Liberation Serif", "Noto Sans CJK SC", serif; fill: #fff; letter-spacing: .4px; }
.ucs { fill: none; stroke: #fff; stroke-width: 1; }
.sc0 { fill: none; stroke: #666; }
.sc1 { fill: #666; }
.sct { font: 11px "Liberation Sans", sans-serif; fill: #666; text-anchor: middle; }
.dyn { position: absolute; height: 21px; background: #fff; border: 1px solid #b0b0d0; display: flex; align-items: center; padding: 2px; }
.d1 { left: 630px; top: 299px; width: 62px; padding-left: 5px; padding-right: 5px; }
.d2 { left: 564px; top: 416px; width: 49px; padding-left: 4px; padding-right: 5px; }
.d2 .dv { border-right: 1px solid #f08020; }
.dv { background: #0078d7; color: #fff; font: 12.500px "Liberation Sans", sans-serif; display: block; width: 100%; height: 15px; line-height: 15px; white-space: nowrap; overflow: hidden; }
.tip { position: absolute; left: 597px; top: 385px; width: 89px; height: 21px; background: #1b1b5e; border: 1px solid #b0b0d0; color: #c8c8e4; font-size: 12px; line-height: 19px; padding-left: 4px; white-space: nowrap; }
.panel { position: absolute; left: 1083px; top: 141px; width: 134px; height: 344px; background: #f0f0f0; display: flex; flex-direction: column; }
.phead { height: 30px; flex: none; background: #fff; display: flex; align-items: center; justify-content: space-between; padding: 0 1px 0 8px; border-bottom: 1px solid #9a9a9a; }
.ptitle { color: #aaa; }
.pclose { width: 19px; height: 19px; background: #e8e8e8; color: #fff; text-align: center; line-height: 17px; font-size: 11px; }
.pbtn { height: 30px; flex: none; display: grid; grid-template-columns: 20px 1fr; align-items: center; text-align: center; border: solid #9a9a9a; border-width: 0 1px 2px 1px; padding-top: 1px; background: #f0f0f0; color: #222; font-size: 14px; line-height: 20px; white-space: nowrap; }
.pi { width: 20px; height: 20px; display: block; margin-left: 6px; }
.pfoot { flex: 1; }

/* sheet tabs */
.sheet { flex: 1; display: flex; align-items: flex-start; gap: 2px; background: #eee; }
.snav { display: flex; width: 30px; height: 17px; border: 1px solid #b4b4b4; border-top: 0; }
.sa { width: 14px; height: 16px; border-right: 1px solid #b4b4b4; }
.stab { margin-left: 1px; }

/* right */
.righttb { width: 88px; flex: none; height: 755px; margin-top: 3px; padding-top: 2px; background: linear-gradient(90deg, #fff, #f4f4f4); }
.hgrip.wide { width: 76px; margin: 0 0 0 6px; }
.rcols { display: flex; height: 747px; padding-top: 3px; }
.rcol .i { margin-bottom: 6px; }
.c1 { width: 42px; padding-left: 5px; border-right: 1px solid #b4b4b4; margin-right: 7px; height: 100%; }
.vsep { display: block; width: 30px; height: 1px; background: #c0c0c0; margin: -1px 0 5px 1px; }
.v2 { margin: 0 0 6px 1px; }

/* splitter */
.splitter { height: 5px; flex: none; background: #e8e8e8; border-bottom: 1px solid #888; }

/* command */
.cmd { height: 69px; flex: none; background: #fff; border-left: 2px solid #a0a0a0; display: flex; flex-direction: column; }
.output { height: 49px; flex: none; display: flex; border-bottom: 1px solid #a0a0a0; padding-left: 3px; }
.lines { padding-top: 13px; }
.cl { font-size: 13px; line-height: 17px; color: #222; white-space: pre; }
.input .cl { margin-top: -2px; }
.lat { font: 11px "Liberation Mono", monospace; white-space: pre; letter-spacing: -.4px; }
.vbar { margin-left: auto; margin-right: 5px; width: 15px; height: 44px; margin-top: 3px; background: rgba(240,240,240,.8); display: flex; flex-direction: column; justify-content: space-between; align-items: center; line-height: 10px; color: #333; font-size: 13px; font-weight: bold; }
.input { flex: 1; display: flex; padding-left: 3px; }
.hbar { margin-left: auto; margin-right: 8px; background: #f0f0f0; display: flex; justify-content: space-between; align-items: center; height: 18px; margin-top: 1px; position: relative; width: 82px; padding: 0 5px; }
.har { font-size: 15px; font-weight: bold; line-height: 14px; color: #333; }
.thumb { width: 17px; height: 17px; background: #cdcdcd; position: absolute; left: 15px; top: 0; }

/* status */
.status { flex: 1; display: flex; align-items: center; background: #f0f0f0; border-bottom: 1px solid #999; padding: 0 88px 0 3px; justify-content: space-between; }
.coords { font: 12px "Open Sans", "Liberation Sans", sans-serif; white-space: pre; color: #222; letter-spacing: .22px; }
.stats { display: flex; align-items: center; }
.st { margin-right: 12px; color: #222; white-space: nowrap; }
.st.last { margin-right: 11px; }
.on { border: 1px solid #0078d7; background: #e4eff9; height: 18px; line-height: 16px; text-align: center; }
.dyn-b { width: 35px; margin-right: 3px; font: 12.500px/16px "Liberation Sans", sans-serif; }
.lw-b { width: 27px; margin-right: 10px; }
.link { color: #1010e8; white-space: nowrap; }

/* desktop watermark overlays */
.wm { position: absolute; color: #c8c8c8; white-space: nowrap; overflow: hidden; }
.w1 { left: 1341px; top: 936px; width: 59px; font-size: 19px; line-height: 28px; }
.w2 { left: 1341px; top: 964px; width: 59px; font-size: 14px; line-height: 18px; }
.wm3 { position: absolute; left: 1238px; top: 1002px; color: rgba(90,90,90,.6); font-size: 15px; line-height: 18px; letter-spacing: 1px; white-space: nowrap; }
.brand { position: absolute; left: 1331px; top: 1003px; display: flex; align-items: center; gap: 2px; color: #333; white-space: nowrap; font-size: 10px; letter-spacing: -.5px; }
.blogo { width: 15px; height: 15px; }
```
